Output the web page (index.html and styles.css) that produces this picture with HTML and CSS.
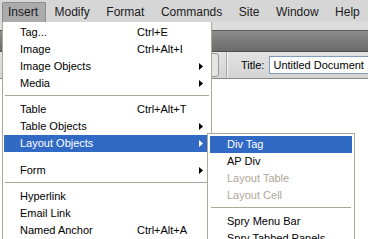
FILE: index.html
```html
<!DOCTYPE html>
<html>
<head>
<meta charset="utf-8">
<link rel="stylesheet" href="styles.css">
</head>
<body>
<div class="app">
  <div class="menubar">
    <span class="mb-item active">Insert</span>
    <span class="mb-item">Modify</span>
    <span class="mb-item">Format</span>
    <span class="mb-item">Commands</span>
    <span class="mb-item">Site</span>
    <span class="mb-item">Window</span>
    <span class="mb-item">Help</span>
  </div>
  <div class="strip"></div>
  <div class="darkbar"></div>
  <div class="toolbar">
    <span class="tb-btn"></span>
    <span class="tb-sep"></span>
    <label class="tb-label">Title:</label>
    <span class="tb-input">Untitled Document</span>
  </div>
  <div class="doc"></div>

  <div class="menu main">
    <div class="row"><span class="lbl">Tag...</span><span class="key">Ctrl+E</span><span class="arr"></span></div>
    <div class="row"><span class="lbl">Image</span><span class="key">Ctrl+Alt+I</span><span class="arr"></span></div>
    <div class="row"><span class="lbl">Image Objects</span><span class="key"></span><span class="arr"><svg width="4" height="7" viewBox="0 0 4 7"><polygon points="0,0 4,3.5 0,7" fill="#000"/></svg></span></div>
    <div class="row"><span class="lbl">Media</span><span class="key"></span><span class="arr"><svg width="4" height="7" viewBox="0 0 4 7"><polygon points="0,0 4,3.5 0,7" fill="#000"/></svg></span></div>
    <div class="sep"></div>
    <div class="row"><span class="lbl">Table</span><span class="key">Ctrl+Alt+T</span><span class="arr"></span></div>
    <div class="row"><span class="lbl">Table Objects</span><span class="key"></span><span class="arr"><svg width="4" height="7" viewBox="0 0 4 7"><polygon points="0,0 4,3.5 0,7" fill="#000"/></svg></span></div>
    <div class="row hl"><span class="lbl">Layout Objects</span><span class="key"></span><span class="arr"><svg width="4" height="7" viewBox="0 0 4 7"><polygon points="0,0 4,3.5 0,7" fill="#fff"/></svg></span></div>
    <div class="gap"></div>
    <div class="row"><span class="lbl">Form</span><span class="key"></span><span class="arr"><svg width="4" height="7" viewBox="0 0 4 7"><polygon points="0,0 4,3.5 0,7" fill="#000"/></svg></span></div>
    <div class="sep"></div>
    <div class="row"><span class="lbl">Hyperlink</span><span class="key"></span><span class="arr"></span></div>
    <div class="row"><span class="lbl">Email Link</span><span class="key"></span><span class="arr"></span></div>
    <div class="row"><span class="lbl">Named Anchor</span><span class="key">Ctrl+Alt+A</span><span class="arr"></span></div>
  </div>

  <div class="menu sub">
    <div class="row hl"><span class="lbl">Div Tag</span></div>
    <div class="row"><span class="lbl">AP Div</span></div>
    <div class="row dis"><span class="lbl">Layout Table</span></div>
    <div class="row dis"><span class="lbl">Layout Cell</span></div>
    <div class="sep"></div>
    <div class="row"><span class="lbl">Spry Menu Bar</span></div>
    <div class="row"><span class="lbl">Spry Tabbed Panels</span></div>
  </div>
</div>
</body>
</html>
```

FILE: styles.css
```css
* { box-sizing: border-box; }
html, body { margin: 0; padding: 0; }
body { width: 368px; height: 239px; overflow: hidden; background: #d6d6d6; }

.app {
  position: relative;
  width: 368px;
  height: 239px;
  overflow: hidden;
  display: flex;
  flex-direction: column;
  font-family: "Liberation Sans", Arial, sans-serif;
  color: #000;
}

.menubar {
  height: 22px;
  flex: none;
  display: flex;
  align-items: flex-end;
  gap: 2.5px;
  padding-left: 2px;
  background: #d6d6d6;
  font-size: 12px;
  color: #1a1a1a;
}
.mb-item {
  flex: none;
  height: 20px;
  line-height: 19px;
  padding: 0 7px 0 5px;
  border: 1px solid transparent;
  border-bottom: none;
  white-space: nowrap;
}
.mb-item.active {
  background: #ababab;
  border-color: #8c8c8c;
  border-radius: 2px 2px 0 0;
}

.strip { height: 8px; flex: none; background: #dcdcdc; }
.darkbar {
  height: 22px;
  flex: none;
  border-top: 1px solid #5a5a5a;
  border-bottom: 1px solid #4e4e4e;
  background: linear-gradient(#8e8e8e, #7c7c7c 45%, #6c6c6c);
}
.toolbar {
  height: 27px;
  flex: none;
  display: flex;
  align-items: center;
  background: linear-gradient(#e2e2e2, #d4d4d4);
  border-bottom: 1px solid #8a8a8a;
  font-size: 11px;
}
.tb-btn {
  flex: none;
  width: 30px;
  height: 24px;
  margin-left: 189px;
  border: 1px solid #9a9a9a;
  border-radius: 3px;
  background: #e4e4e4;
}
.tb-sep {
  flex: none;
  width: 1px;
  align-self: stretch;
  margin-left: 7px;
  background: #a8a8a8;
  box-shadow: 1px 0 0 #f2f2f2;
}
.tb-label { flex: none; margin-left: 14px; }
.tb-input {
  margin-left: 5px;
  flex: 1;
  min-width: 0;
  height: 18px;
  line-height: 16px;
  padding-left: 3px;
  background: #fff;
  border: 1px solid #7f9db9;
  border-right: none;
  white-space: nowrap;
  overflow: hidden;
}
.doc { flex: 1; background: #fff; }

.menu {
  position: absolute;
  background: #fff;
  border: 1px solid #aca899;
  font-size: 11px;
}
.menu.main {
  left: 2px;
  top: 22px;
  width: 210px;
  padding: 2px 1px;
  border-top: none;
}
.menu.sub {
  left: 207px;
  top: 133px;
  width: 148px;
  padding: 2px;
}
.row {
  height: 17px;
  line-height: 17px;
  display: grid;
  grid-template-columns: 117px 1fr 11px;
  padding-left: 16px;
  white-space: nowrap;
}
.sub .row { display: block; padding-left: 17px; }
.row.hl { background: #316ac5; color: #fff; }
.row.dis { color: #aca899; }
.arr { display: flex; align-items: center; }
.sep { height: 9px; padding-top: 3px; }
.sep::before { content: ""; display: block; height: 1px; background: #aca899; margin: 0 1px; }
.gap { height: 10px; }
```
